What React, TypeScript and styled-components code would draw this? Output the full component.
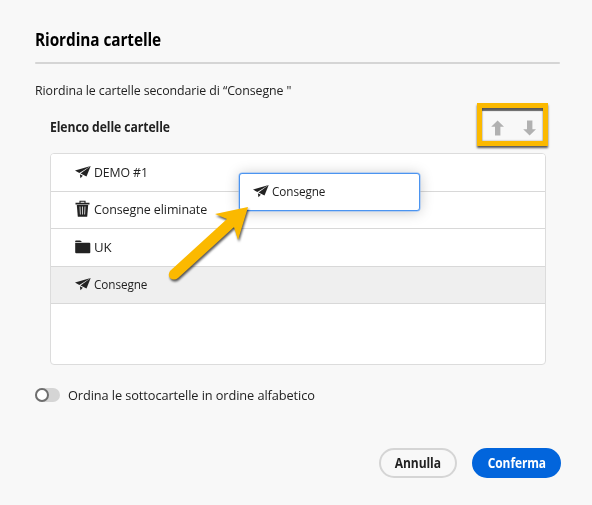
import React from "react";
import styled, { createGlobalStyle } from "styled-components";

const GlobalStyle = createGlobalStyle`
  * { box-sizing: border-box; }
  body { margin: 0; background: #f8f8f8; }
`;

const Dialog = styled.main`
  position: relative;
  width: 592px;
  height: 505px;
  padding: 28px 32px 0 35px;
  overflow: hidden;
  background: #f8f8f8;
  color: #222;
  font-family: "Open Sans", "Noto Sans", sans-serif;
  font-size: 13.5px;
`;

const Text = styled.span<{ $condense?: number; $centered?: boolean }>`
  display: inline-block;
  white-space: pre;
  letter-spacing: -0.1px;
  transform: scaleX(${(p) => p.$condense ?? 1});
  transform-origin: ${(p) => (p.$centered ? "center" : "left")};
`;

const Title = styled.h1`
  margin: 0;
  height: 34px;
  font-size: 17px;
  line-height: 24px;
  font-weight: 700;
  color: #000;
`;

const Rule = styled.hr`
  width: 525px;
  height: 2px;
  margin: 0;
  border: 0;
  border-radius: 1px;
  background: #d5d5d5;
`;

const Intro = styled.p`
  margin: 16px 0 0;
  line-height: 20px;
`;

const ListHeader = styled.div`
  display: flex;
  justify-content: space-between;
  align-items: center;
  width: 514px;
  height: 46px;
  margin: 1px 0 0 15px;
  font-weight: 700;

  > span { padding-top: 5px; }
`;

const MoveButtons = styled.div`
  display: flex;
  align-items: center;
  justify-content: center;
  gap: 19px;
  width: 71px;
  height: 43px;
  margin-right: 16px;
  padding: 7px 0 0 1px;
  border: 5px solid #fbb900;
  box-shadow: 0 2px 2px rgba(0, 0, 0, 0.65), inset 0 3px 1px rgba(0, 0, 0, 0.6),
    inset 0 0 2px rgba(0, 0, 0, 0.4);
`;

const FolderList = styled.ul`
  width: 496px;
  height: 212px;
  margin: 6px 0 0 15px;
  padding: 0;
  list-style: none;
  background: #fff;
  border: 1.5px solid #dcdcdc;
  border-radius: 4px;
  overflow: hidden;
`;

const FolderRow = styled.li<{ $selected?: boolean }>`
  display: flex;
  align-items: center;
  gap: 3px;
  height: 37.5px;
  padding: 0 0 1px 24px;
  border-bottom: 1px solid #d8d8d8;
  background: ${(p) => (p.$selected ? "#efefef" : "#fff")};
`;

const DragCard = styled.div`
  position: absolute;
  left: 239px;
  top: 173px;
  display: flex;
  align-items: center;
  gap: 3px;
  width: 181px;
  height: 38px;
  padding: 0 0 2px 13px;
  background: #fff;
  border: 1px solid #4b94f0;
  border-radius: 3px;
  box-shadow: 0 0 0 0.5px #8dbaf5, 0 1px 14px rgba(0, 0, 0, 0.22);
`;

const Pointer = styled.svg`
  position: absolute;
  left: 155px;
  top: 195px;
  filter: drop-shadow(1px 2px 1px rgba(0, 0, 0, 0.65));
`;

const SwitchRow = styled.label`
  display: flex;
  align-items: center;
  gap: 8px;
  height: 20px;
  margin-top: 20px;
`;

const Track = styled.span`
  width: 25px;
  height: 14px;
  border-radius: 7px;
  background: #d5d5d5;
`;

const Knob = styled.span`
  display: block;
  width: 14px;
  height: 14px;
  border: 2px solid #6e6e6e;
  border-radius: 50%;
  background: #fff;
`;

const Footer = styled.footer`
  display: flex;
  justify-content: flex-end;
  gap: 15px;
  margin: 43px -1px 0 0;
`;

const Button = styled.button<{ $primary?: boolean }>`
  display: flex;
  align-items: center;
  justify-content: center;
  width: ${(p) => (p.$primary ? 89 : 78)}px;
  height: 30px;
  padding: 0 0 1px;
  border: 2px solid ${(p) => (p.$primary ? "#0265dc" : "#d5d5d5")};
  border-radius: 15px;
  background: ${(p) => (p.$primary ? "#0265dc" : "transparent")};
  color: ${(p) => (p.$primary ? "#fff" : "#222")};
  font: 700 13.5px/20px "Open Sans", "Noto Sans", sans-serif;
`;

const PlaneIcon = () => (
  <svg width="16" height="14" viewBox="0 0 16 14" fill="#222">
    <path d="M15.7 1 0 5.6 4.3 8.1Z" />
    <path d="M15.7 1 5.6 8.5 11.5 11.6Z" />
    <path d="M4.9 9.2 7.8 10.8 5.4 13.2Z" />
  </svg>
);

const TrashIcon = () => (
  <svg width="16" height="18" viewBox="0 0 16 18" fill="none" stroke="#222">
    <path d="M5 3V1.2h5V3" strokeWidth="1.1" />
    <path d="M.5 3.6h14" strokeWidth="1.7" />
    <path d="M1.8 5h11.4l-1 11.7H2.8Z" fill="#222" stroke="none" />
    <path d="M5 6.5l.4 8M7.5 6.5v8M10 6.5l-.4 8" stroke="#ddd" strokeWidth=".9" />
  </svg>
);

const FolderIcon = () => (
  <svg width="16" height="14" viewBox="0 0 16 14" fill="#222">
    <path d="M.2 2V1.2Q.2.4 1 .4h4.2L7 2Z" />
    <path d="M.2 2.7h14.1q1 0 1 1v8.6q0 1-1 1H1.2q-1 0-1-1Z" />
  </svg>
);

const MoveIcon = ({ down }: { down?: boolean }) => (
  <svg width="13" height="16" viewBox="0 0 13 16" fill="#b1b1b1">
    <path d={down ? "M4 .5h5.4v8.7H13L6.6 15.5.2 9.2H4Z" : "M4 15.5h5.4V6.8H13L6.6.5.2 6.8H4Z"} />
  </svg>
);

export default function App() {
  return (
    <>
      <GlobalStyle />
      <Dialog>
        <Title><Text $condense={0.905}>Riordina cartelle</Text></Title>
        <Rule />
        <Intro><Text $condense={0.917}>Riordina le cartelle secondarie di “Consegne "</Text></Intro>
        <ListHeader>
          <Text $condense={0.903}>Elenco delle cartelle</Text>
          <MoveButtons><MoveIcon /><MoveIcon down /></MoveButtons>
        </ListHeader>
        <FolderList>
          <FolderRow><PlaneIcon /><Text $condense={0.91}>DEMO #1</Text></FolderRow>
          <FolderRow><TrashIcon /><Text $condense={0.925}>Consegne eliminate</Text></FolderRow>
          <FolderRow><FolderIcon /><Text $condense={0.98}>UK</Text></FolderRow>
          <FolderRow $selected><PlaneIcon /><Text $condense={0.87}>Consegne</Text></FolderRow>
        </FolderList>
        <SwitchRow>
          <Track><Knob /></Track>
          <Text $condense={0.947}>Ordina le sottocartelle in ordine alfabetico</Text>
        </SwitchRow>
        <Footer>
          <Button><Text $condense={0.895} $centered>Annulla</Text></Button>
          <Button $primary><Text $condense={0.885} $centered>Conferma</Text></Button>
        </Footer>
        <DragCard><PlaneIcon /><Text $condense={0.87}>Consegne</Text></DragCard>
        <Pointer width="110" height="95" viewBox="0 0 110 95" fill="#fbb900">
          <path d="M93 12 60 19 72 24 15 76Q12.5 80 15 83Q19 86 23 83L79 32 83 45Z" />
        </Pointer>
      </Dialog>
    </>
  );
}
